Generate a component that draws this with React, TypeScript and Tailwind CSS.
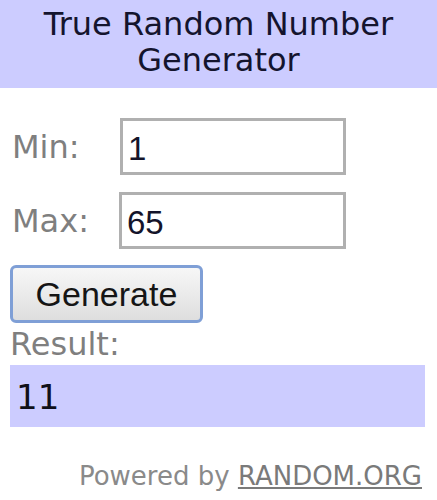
import { useState } from 'react'

const verdana = { fontFamily: '"DejaVu Sans", Verdana, sans-serif' }
const arial = { fontFamily: '"Liberation Sans", Arial, sans-serif' }

export default function App() {
  const [min, setMin] = useState('1')
  const [max, setMax] = useState('65')
  const [result, setResult] = useState(11)

  const generate = () => {
    const lo = parseInt(min, 10) || 0
    const hi = parseInt(max, 10) || 0
    setResult(Math.floor(Math.random() * (hi - lo + 1)) + lo)
  }

  return (
    <div className="w-[437px] h-[500px] bg-white overflow-hidden" style={verdana}>
      <div className="bg-[#ccccff] pt-[6px] pb-[10px] text-center text-[32px] leading-[36px] text-[#14142e]">
        True Random Number
        <br />
        Generator
      </div>

      <div className="pl-[10px] pr-[12px]">
        <div className="mt-[30px] flex items-center">
          <label className="w-[110px] text-[32px] leading-[36px] text-[#7f7f7f] pl-[2px] mt-[1px]">Min:</label>
          <input
            value={min}
            onChange={(e) => setMin(e.target.value)}
            className="w-[226px] h-[57px] border-[3px] border-[#b0b0b0] bg-white pl-[5px] pt-[4px] text-[33px] text-[#14142a] outline-none"
            style={arial}
          />
        </div>

        <div className="mt-[17px] flex items-center">
          <label className="w-[109px] text-[32px] leading-[36px] text-[#7f7f7f] pl-[2px] mt-[1px]">Max:</label>
          <input
            value={max}
            onChange={(e) => setMax(e.target.value)}
            className="w-[227px] h-[57px] border-[3px] border-[#b0b0b0] bg-white pl-[5px] pt-[4px] text-[33px] text-[#14142a] outline-none"
            style={arial}
          />
        </div>

        <button
          onClick={generate}
          className="mt-[16px] w-[193px] h-[58px] rounded-[6px] border-[3px] border-[#7f9fd6] bg-gradient-to-b from-[#f7f7f7] to-[#dedede] text-[34px] text-[#151515] pt-[1px]"
          style={arial}
        >
          Generate
        </button>

        <div className="mt-[3px] text-[32px] leading-[36px] text-[#7f7f7f]">Result:</div>

        <div className="mt-[3px] h-[62px] bg-[#ccccff] pl-[6px] pt-[12px] text-[34px] leading-[40px] text-[#101018]">
          {result}
        </div>

        <div className="mt-[34px] text-right pr-[3px] text-[26px] leading-[30px] text-[#8a8a8a]">
          Powered by{' '}
          <a href="#" className="underline text-[#7a7a7a]">RANDOM.ORG</a>
        </div>
      </div>
    </div>
  )
}
